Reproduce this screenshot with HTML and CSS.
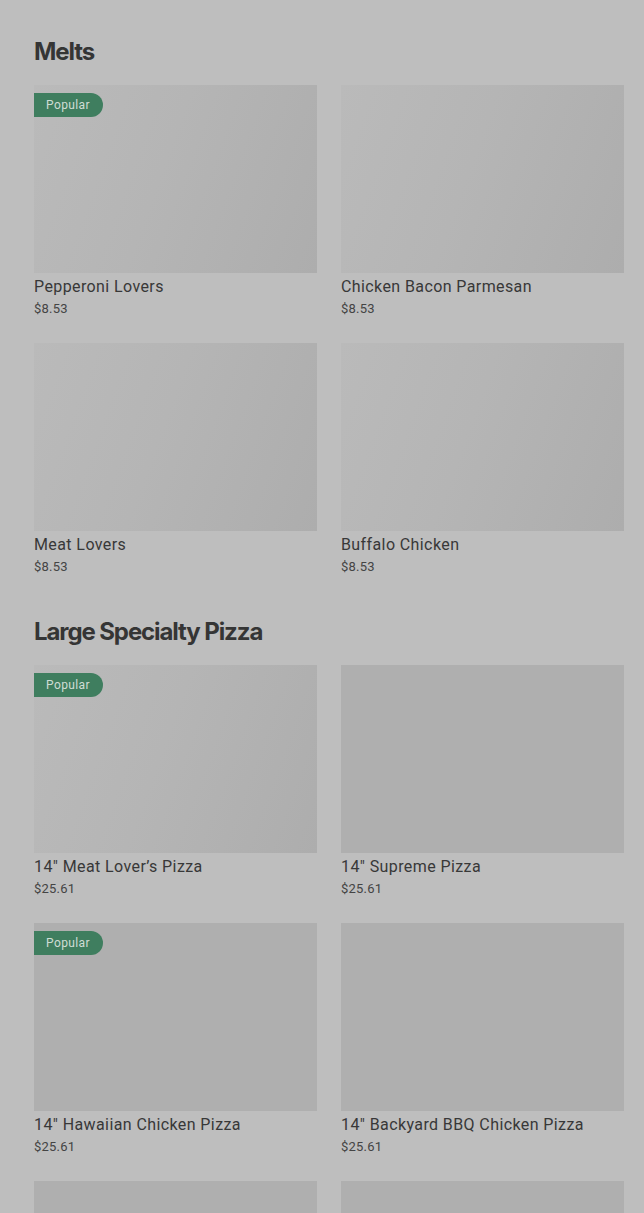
FILE: index.html
```html
<!DOCTYPE html>
<html lang="en">
<head>
<meta charset="utf-8">
<title>Menu</title>
<link rel="stylesheet" href="styles.css">
</head>
<body>
<main class="page">
  <section class="section">
    <h2 class="section-title">Melts</h2>
    <div class="grid">
      <div class="card">
        <div class="thumb shimmer"><span class="badge">Popular</span></div>
        <div class="name">Pepperoni Lovers</div>
        <div class="price">$8.53</div>
      </div>
      <div class="card">
        <div class="thumb shimmer"></div>
        <div class="name">Chicken Bacon Parmesan</div>
        <div class="price">$8.53</div>
      </div>
      <div class="card">
        <div class="thumb shimmer"></div>
        <div class="name">Meat Lovers</div>
        <div class="price">$8.53</div>
      </div>
      <div class="card">
        <div class="thumb shimmer"></div>
        <div class="name">Buffalo Chicken</div>
        <div class="price">$8.53</div>
      </div>
    </div>
  </section>
  <section class="section">
    <h2 class="section-title">Large Specialty Pizza</h2>
    <div class="grid">
      <div class="card">
        <div class="thumb shimmer"><span class="badge">Popular</span></div>
        <div class="name">14" Meat Lover’s Pizza</div>
        <div class="price">$25.61</div>
      </div>
      <div class="card">
        <div class="thumb"></div>
        <div class="name">14" Supreme Pizza</div>
        <div class="price">$25.61</div>
      </div>
      <div class="card">
        <div class="thumb"><span class="badge">Popular</span></div>
        <div class="name">14" Hawaiian Chicken Pizza</div>
        <div class="price">$25.61</div>
      </div>
      <div class="card">
        <div class="thumb"></div>
        <div class="name">14" Backyard BBQ Chicken Pizza</div>
        <div class="price">$25.61</div>
      </div>
      <div class="card">
        <div class="thumb"></div>
      </div>
      <div class="card">
        <div class="thumb"></div>
      </div>
    </div>
  </section>
</main>
</body>
</html>
```

FILE: styles.css
```css
html, body {
  margin: 0;
  padding: 0;
  background: #bebebe;
  height: 1213px;
  overflow: hidden;
}

.page {
  padding: 36px 20px 0 34px;
  display: flex;
  flex-direction: column;
  gap: 39px;
  font-family: Roboto, "Liberation Sans", sans-serif;
  color: #383838;
}

.section-title {
  margin: 0 0 17px;
  font-family: Inter, "Liberation Sans", sans-serif;
  font-weight: 700;
  font-size: 24px;
  line-height: 32px;
  letter-spacing: -1.1px;
  color: #353535;
}

.grid {
  display: grid;
  grid-template-columns: 283px 283px;
  column-gap: 24px;
  row-gap: 24px;
}

.card {
  display: flex;
  flex-direction: column;
}

.thumb {
  position: relative;
  height: 188px;
  background: #afafaf;
}

.thumb.shimmer {
  background: linear-gradient(110deg, #bababa 0%, #b5b5b5 45%, #adadad 100%);
}

.badge {
  position: absolute;
  top: 8px;
  left: 0;
  height: 24px;
  line-height: 24px;
  padding: 0 13px 0 12px;
  border-radius: 0 12px 12px 0;
  background: #3f7e5f;
  color: #cfddd5;
  font-size: 12px;
  letter-spacing: 0.4px;
}

.name {
  margin-top: 4px;
  font-size: 16px;
  line-height: 20px;
  letter-spacing: 0.4px;
  color: #383838;
}

.price {
  margin-top: 2px;
  font-size: 13px;
  line-height: 20px;
  letter-spacing: 0.2px;
  color: #444444;
}
```
